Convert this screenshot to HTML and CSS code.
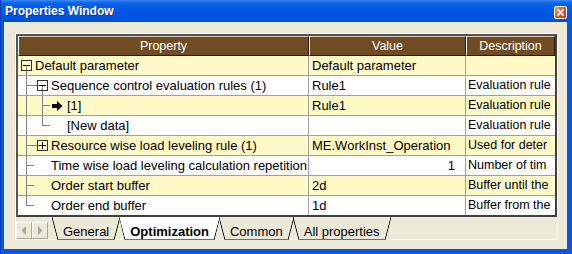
FILE: index.html
```html
<!DOCTYPE html>
<html lang="en">
<head>
  <meta charset="UTF-8">
  <title>Properties Window</title>
  <link rel="stylesheet" href="styles.css">
</head>
<body>
  <div class="window">
    <div class="titlebar">
      <span class="title">Properties Window</span>
      <span class="close">
        <svg width="13" height="13" viewBox="0 0 13 13">
          <defs>
            <linearGradient id="cg" x1="0" y1="0" x2="1" y2="1">
              <stop offset="0" stop-color="#f0997a"/>
              <stop offset="0.5" stop-color="#e0552f"/>
              <stop offset="1" stop-color="#c23714"/>
            </linearGradient>
          </defs>
          <rect x="0.5" y="0.5" width="12" height="12" rx="1.5" fill="url(#cg)" stroke="#fff"/>
          <path d="M3.5 3.5l6 6M9.5 3.5l-6 6" stroke="#fff" stroke-width="1.8"/>
        </svg>
      </span>
    </div>

    <div class="client">
      <div class="frame">
        <div class="grid">
          <div class="head">
            <div class="hcell">Property</div>
            <div class="hcell">Value</div>
            <div class="hcell">Description</div>
          </div>

          <div class="rows">
            <!-- Default parameter -->
            <div class="row odd">
              <div class="cell prop">
                <span class="seg open"><i class="box minus"></i></span>
                <span class="txt">Default parameter</span>
              </div>
              <div class="cell">Default parameter</div>
              <div class="cell desc"></div>
            </div>

            <div class="row">
              <div class="cell prop">
                <span class="seg tee"></span>
                <span class="seg lead open"><i class="box minus"></i></span>
                <span class="txt">Sequence control evaluation rules (1)</span>
              </div>
              <div class="cell">Rule1</div>
              <div class="cell desc">Evaluation rule</div>
            </div>

            <div class="row odd">
              <div class="cell prop">
                <span class="seg pipe"></span>
                <span class="seg tee"></span>
                <span class="seg ptr">
                  <svg width="11" height="10" viewBox="0 0 11 10"><path d="M0 3h5V0l5.5 5L5 10V7H0z" fill="#000"/></svg>
                </span>
                <span class="txt">[1]</span>
              </div>
              <div class="cell">Rule1</div>
              <div class="cell desc">Evaluation rule</div>
            </div>

            <div class="row">
              <div class="cell prop">
                <span class="seg pipe"></span>
                <span class="seg ell"></span>
                <span class="seg"></span>
                <span class="txt">[New data]</span>
              </div>
              <div class="cell"></div>
              <div class="cell desc">Evaluation rule</div>
            </div>

            <div class="row odd">
              <div class="cell prop">
                <span class="seg tee"></span>
                <span class="seg lead"><i class="box plus"></i></span>
                <span class="txt">Resource wise load leveling rule (1)</span>
              </div>
              <div class="cell">ME.WorkInst_Operation</div>
              <div class="cell desc">Used for deter</div>
            </div>

            <div class="row">
              <div class="cell prop">
                <span class="seg tee"></span>
                <span class="seg"></span>
                <span class="txt">Time wise load leveling calculation repetition</span>
              </div>
              <div class="cell num">1</div>
              <div class="cell desc">Number of tim</div>
            </div>

            <div class="row odd">
              <div class="cell prop">
                <span class="seg tee"></span>
                <span class="seg"></span>
                <span class="txt">Order start buffer</span>
              </div>
              <div class="cell">2d</div>
              <div class="cell desc">Buffer until the</div>
            </div>

            <div class="row">
              <div class="cell prop">
                <span class="seg ell"></span>
                <span class="seg"></span>
                <span class="txt">Order end buffer</span>
              </div>
              <div class="cell">1d</div>
              <div class="cell desc">Buffer from the</div>
            </div>
          </div>
        </div>

        <div class="tabbar">
          <span class="scroll-btn">
            <svg width="6" height="9" viewBox="0 0 6 9"><path d="M5 0v9L0.5 4.5z" fill="#aca899"/></svg>
          </span>
          <span class="scroll-btn">
            <svg width="6" height="9" viewBox="0 0 6 9"><path d="M1 0v9l4.5-4.5z" fill="#aca899"/></svg>
          </span>
          <div class="tabs">
            <span class="tab">General</span>
            <span class="tab active">Optimization</span>
            <span class="tab">Common</span>
            <span class="tab">All properties</span>
          </div>
        </div>
      </div>
    </div>
  </div>
</body>
</html>
```

FILE: styles.css
```css
* {
  margin: 0;
  padding: 0;
  box-sizing: border-box;
}

body {
  width: 572px;
  height: 254px;
  overflow: hidden;
  font-family: "Liberation Sans", Arial, sans-serif;
  font-size: 13px;
  background: #0554e0;
}

.window {
  display: flex;
  flex-direction: column;
  height: 254px;
  background: #0a56e2;
  border-left: 1px solid #0a3fbc;
}

/* title bar */
.titlebar {
  height: 22px;
  display: flex;
  align-items: center;
  justify-content: space-between;
  padding: 0 5px 0 4px;
  background: linear-gradient(#3a8bf8 0, #0c62ea 3px, #0358e6 9px, #0054e3 16px, #004fd8 22px);
}

.title {
  color: #fff;
  font-weight: bold;
  font-size: 12px;
  text-shadow: 1px 1px 0 #0b3aa8;
}

.close {
  display: flex;
  margin-top: 2px;
}

/* client area */
.client {
  flex: 1;
  margin: 0 5px 5px 3px;
  background: #ece9d8;
  padding: 11px 9px 0 11px;
}

.frame {
  border: 1px solid #fff;
  height: 207px;
  display: flex;
  flex-direction: column;
}

.grid {
  border: 2px solid #404040;
  border-color: #555 #404040 #404040 #555;
  background: #fff;
}

.head,
.row {
  display: grid;
  grid-template-columns: 291px 157px 1fr;
}

.head {
  height: 20px;
  background: #704c24;
  font-size: 12.5px;
}

.hcell {
  color: #fff;
  text-align: center;
  line-height: 18px;
  border-top: 1px solid #d8cbb8;
  border-left: 1px solid #fff;
  border-right: 1px solid #2b1a08;
  border-bottom: 1px solid #2b1a08;
  white-space: nowrap;
  overflow: hidden;
}

.rows {
  height: 159px;
  overflow: hidden;
}

.row {
  height: 20px;
  border-bottom: 1px solid #a0a0a0;
  background: #fff;
}

.row.odd {
  background: #fff9c8;
}

.cell {
  line-height: 19px;
  padding-left: 3px;
  white-space: nowrap;
  overflow: hidden;
  border-right: 1px solid #a0a0a0;
  color: #000;
}

.cell:last-child {
  border-right: none;
}

.cell.num {
  text-align: right;
  padding-right: 10px;
}

.cell.desc {
  padding-left: 2px;
  font-size: 12.5px;
}

/* tree column */
.cell.prop {
  display: flex;
  padding-left: 0;
}

.cell.prop .txt {
  padding-left: 1px;
}

.seg {
  position: relative;
  flex: none;
  width: 16px;
  height: 19px;
}

.seg::before,
.seg::after {
  content: "";
  position: absolute;
  background: #808080;
}

.seg.pipe::before,
.seg.tee::before {
  left: 8px;
  top: 0;
  bottom: -1px;
  width: 1px;
}

.seg.tee::after,
.seg.ell::after {
  left: 8px;
  top: 9px;
  width: 8px;
  height: 1px;
}

.seg.ell::before {
  left: 8px;
  top: 0;
  height: 10px;
  width: 1px;
}

.seg.open::before {
  left: 8px;
  top: 9px;
  bottom: -1px;
  width: 1px;
}

.seg.lead::after {
  left: 0;
  top: 9px;
  width: 8px;
  height: 1px;
}

.box {
  position: absolute;
  left: 3px;
  top: 4px;
  width: 11px;
  height: 11px;
  border: 1px solid #303030;
  z-index: 1;
}

.row .box {
  background: inherit;
}

.box::before,
.box::after {
  content: "";
  position: absolute;
  background: #000;
}

.box::before {
  left: 1px;
  top: 4px;
  width: 7px;
  height: 1px;
}

.box.plus::after {
  left: 4px;
  top: 1px;
  width: 1px;
  height: 7px;
}

.seg.ptr svg {
  position: absolute;
  left: 2px;
  top: 5px;
}

/* sheet tabs */
.tabbar {
  display: flex;
  align-items: flex-start;
  height: 24px;
  padding: 5px 0 0 0;
}

.scroll-btn {
  width: 16px;
  height: 17px;
  display: flex;
  align-items: center;
  justify-content: center;
  border: 1px solid;
  border-color: #fff #aca899 #aca899 #fff;
  background: #ece9d8;
}

.tabs {
  display: flex;
  margin-left: 4px;
  margin-top: -5px;
}

.tab {
  position: relative;
  height: 23px;
  padding: 7px 11px 0 11px;
  line-height: 15px;
  white-space: nowrap;
  color: #000;
  background: linear-gradient(#6f6f6f, #6f6f6f) 6px 100% / calc(100% - 12px) 1px no-repeat;
}

.tab + .tab {
  margin-left: -1px;
}

.tab::before,
.tab::after {
  content: "";
  position: absolute;
  top: 0;
  width: 6px;
  height: 100%;
}

.tab::before {
  left: 0;
  background: linear-gradient(to top right, transparent calc(50% - 0.8px), #000 50%, transparent calc(50% + 0.8px));
}

.tab::after {
  right: 0;
  background: linear-gradient(to bottom right, transparent calc(50% - 0.8px), #000 50%, transparent calc(50% + 0.8px));
}

.tab.active {
  font-weight: bold;
  z-index: 1;
  background:
    linear-gradient(#6f6f6f, #6f6f6f) 6px 100% / calc(100% - 12px) 1px no-repeat,
    #fff;
  clip-path: polygon(0 0, 100% 0, calc(100% - 5px) 100%, 5px 100%);
}
```
